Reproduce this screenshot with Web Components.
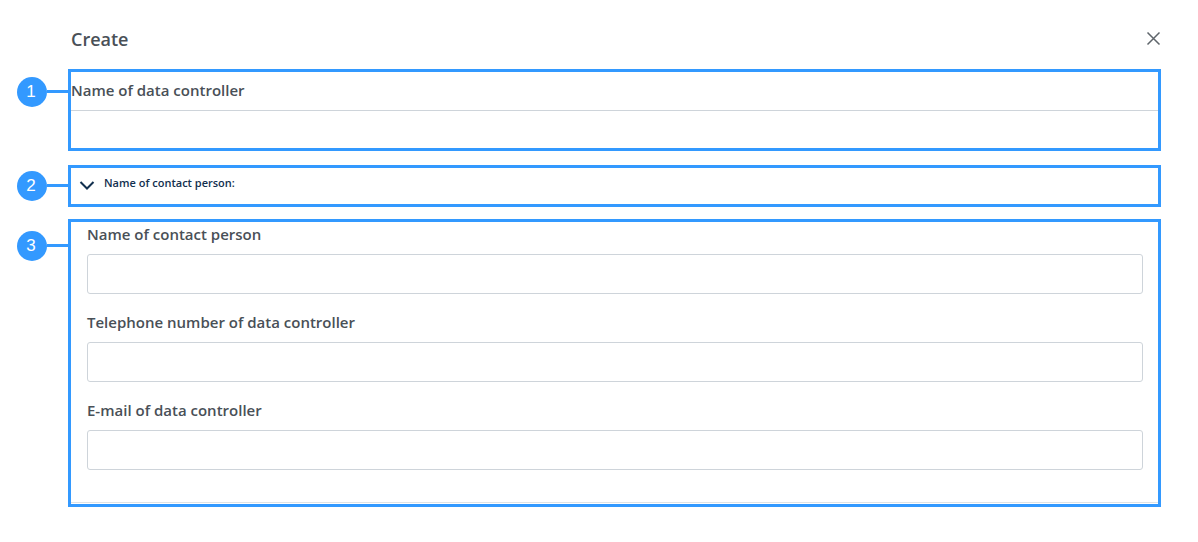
<!DOCTYPE html>
<html lang="en">
<head>
<meta charset="utf-8">
<title>Create</title>
<style>
  body {
    margin: 0;
    background: #fff;
    color: #495057;
    font-family: "Segoe UI", "Open Sans", sans-serif;
    font-size: 15px;
    font-weight: 600;
    line-height: 24px;
  }
</style>
</head>
<body>
<create-dialog></create-dialog>

<script>
class CalloutRow extends HTMLElement {
  constructor() {
    super();
    this.attachShadow({ mode: "open" }).innerHTML = `
      <style>
        :host { display: flex; align-items: flex-start; --accent: #3399ff; }
        .marker {
          flex: none; display: flex; align-items: center; width: 51px;
          margin-top: var(--marker-top, 6px);
        }
        .number {
          flex: none; width: 30px; height: 30px; border-radius: 50%;
          background: var(--accent); color: #fff;
          font: 400 17px/30px "Liberation Sans", Arial, sans-serif; text-align: center;
          box-sizing: border-box; padding-right: 2px;
        }
        .line { flex: 1; height: 3px; margin-bottom: 2px; background: var(--accent); }
        .frame { flex: 1; min-width: 0; border: 3px solid var(--accent); }
      </style>
      <div class="marker"><span class="number"></span><span class="line"></span></div>
      <div class="frame"><slot></slot></div>`;
    this.shadowRoot.querySelector(".number").textContent = this.getAttribute("number");
  }
}

class TextField extends HTMLElement {
  constructor() {
    super();
    this.attachShadow({ mode: "open" }).innerHTML = `
      <style>
        :host { display: flex; flex-direction: column; gap: 8px; }
        input {
          box-sizing: border-box; width: 100%; height: 40px; padding: 8px 12px;
          border: 1px solid #ced4da; border-radius: 3px; background: #fff;
          font: inherit; font-weight: 400; color: inherit;
        }
        :host([flush]) { gap: 2px; }
        :host([flush]) label { line-height: 36px; }
        :host([flush]) input { height: 38px; border-width: 1px 0 0; border-radius: 0; }
      </style>
      <label for="field"></label>
      <input id="field" type="text">`;
    this.shadowRoot.querySelector("label").textContent = this.getAttribute("label");
  }
}

class SectionToggle extends HTMLElement {
  constructor() {
    super();
    this.attachShadow({ mode: "open" }).innerHTML = `
      <style>
        :host { display: block; }
        button {
          display: flex; align-items: flex-start; gap: 9px; width: 100%; height: 36px;
          padding: 5px 8px; border: 0; background: none; text-align: left;
          color: #12304f; font: inherit; font-size: 11px; line-height: 20px;
        }
        svg { flex: none; margin-top: 4px; }
      </style>
      <button type="button" aria-expanded="true">
        <svg width="16" height="16" viewBox="0 0 16 16" fill="none" stroke="currentColor" stroke-width="2" aria-hidden="true"><path d="M1.5 5 8 11.500l6.500-6.500"/></svg>
        <slot></slot>
      </button>`;
  }
}

class CreateDialog extends HTMLElement {
  constructor() {
    super();
    this.attachShadow({ mode: "open" }).innerHTML = `
      <style>
        :host { display: block; padding: 24px 37px 35px 17px; }
        header {
          display: flex; align-items: center; justify-content: space-between;
          padding-left: 54px; margin-bottom: 15px;
        }
        h1 { margin: 0; font-size: 18px; font-weight: 600; line-height: 30px; }
        .close { display: flex; padding: 0; border: 0; background: none; color: #5f656b; }
        form { display: flex; flex-direction: column; }
        .controller { --marker-top: 8px; margin-bottom: 14px; }
        .contact { margin-bottom: 12px; }
        .details { --marker-top: 12px; }
        .fields {
          display: flex; flex-direction: column; gap: 16px;
          padding: 0 15px 32px 16px; margin-bottom: 1px; border-bottom: 1px solid #dee2e6;
        }
      </style>
      <header>
        <h1>Create</h1>
        <button class="close" type="button" aria-label="Close">
          <svg width="16" height="16" viewBox="0 0 16 16" fill="none" stroke="currentColor" stroke-width="1.500" aria-hidden="true"><path d="m2.500 1.500 12 12m0-12-12 12"/></svg>
        </button>
      </header>
      <form>
        <callout-row class="controller" number="1">
          <text-field flush label="Name of data controller"></text-field>
        </callout-row>
        <callout-row class="contact" number="2">
          <section-toggle>Name of contact person:</section-toggle>
        </callout-row>
        <callout-row class="details" number="3">
          <div class="fields">
            <text-field label="Name of contact person"></text-field>
            <text-field label="Telephone number of data controller"></text-field>
            <text-field label="E-mail of data controller"></text-field>
          </div>
        </callout-row>
      </form>`;
  }
}

customElements.define("callout-row", CalloutRow);
customElements.define("text-field", TextField);
customElements.define("section-toggle", SectionToggle);
customElements.define("create-dialog", CreateDialog);
</script>
</body>
</html>
